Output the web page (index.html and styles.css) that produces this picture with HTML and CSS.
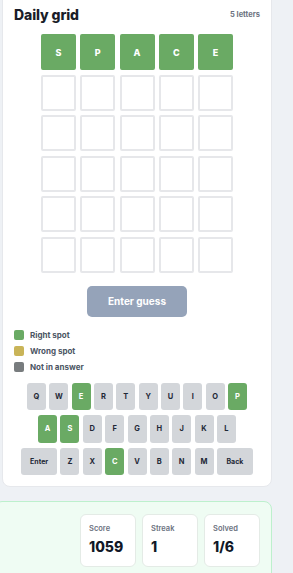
FILE: index.html
```html
<!DOCTYPE html>
<html lang="en">
<head>
<meta charset="UTF-8" />
<meta name="viewport" content="width=device-width, initial-scale=1.0" />
<title>Daily grid</title>
<link rel="stylesheet" href="styles.css">
</head>
<body>
<div class="page">

<!-- board -->
<section class="card board">
  <div class="board-head">
    <h2>Daily grid</h2>
    <span class="meta">5 letters</span>
  </div>

  <div class="grid">
    <div class="tile hit">S</div><div class="tile hit">P</div><div class="tile hit">A</div><div class="tile hit">C</div><div class="tile hit">E</div>
    <div class="tile"></div><div class="tile"></div><div class="tile"></div><div class="tile"></div><div class="tile"></div>
    <div class="tile"></div><div class="tile"></div><div class="tile"></div><div class="tile"></div><div class="tile"></div>
    <div class="tile"></div><div class="tile"></div><div class="tile"></div><div class="tile"></div><div class="tile"></div>
    <div class="tile"></div><div class="tile"></div><div class="tile"></div><div class="tile"></div><div class="tile"></div>
    <div class="tile"></div><div class="tile"></div><div class="tile"></div><div class="tile"></div><div class="tile"></div>
  </div>

  <button class="enter-btn" type="button">Enter guess</button>

  <ul class="legend">
    <li><span class="swatch right"></span>Right spot</li>
    <li><span class="swatch wrong"></span>Wrong spot</li>
    <li><span class="swatch none"></span>Not in answer</li>
  </ul>

  <div class="keyboard">
    <div class="kb-row">
      <span class="key">Q</span><span class="key">W</span><span class="key hit">E</span><span class="key">R</span><span class="key">T</span><span class="key">Y</span><span class="key">U</span><span class="key">I</span><span class="key">O</span><span class="key hit">P</span>
    </div>
    <div class="kb-row">
      <span class="key hit">A</span><span class="key hit">S</span><span class="key">D</span><span class="key">F</span><span class="key">G</span><span class="key">H</span><span class="key">J</span><span class="key">K</span><span class="key">L</span>
    </div>
    <div class="kb-row">
      <span class="key wide">Enter</span><span class="key">Z</span><span class="key">X</span><span class="key hit">C</span><span class="key">V</span><span class="key">B</span><span class="key">N</span><span class="key">M</span><span class="key wide">Back</span>
    </div>
  </div>
</section>

<!-- stats -->
<section class="card stats">
  <div class="stat">
    <div class="stat-label">Score</div>
    <div class="stat-value">1059</div>
  </div>
  <div class="stat">
    <div class="stat-label">Streak</div>
    <div class="stat-value">1</div>
  </div>
  <div class="stat">
    <div class="stat-label">Solved</div>
    <div class="stat-value">1/6</div>
  </div>
</section>

</div>
</body>
</html>
```

FILE: styles.css
```css
body {
    margin: 0;
    background-color: #eef1f5;
    font-family: Inter, "Noto Sans", "Liberation Sans", sans-serif;
    color: #111827;
    overflow: hidden;
}
.page {
    margin-top: -10px;
}
.card {
    border-radius: 8px;
    box-sizing: border-box;
}
.board {
    background-color: #ffffff;
    border: 1px solid #e6e8ec;
    margin: 0 21px 0 2px;
    padding: 14px 11px 11px;
}
.board-head {
    display: flex;
    justify-content: space-between;
    align-items: center;
    height: 18px;
}
.board-head h2 {
    margin: 0;
    font-size: 14px;
    font-weight: 800;
    color: #1a1d29;
    letter-spacing: -0.1px;
}
.meta {
    font-size: 7.5px;
    font-weight: 700;
    color: #6b7280;
}
.grid {
    display: grid;
    grid-template-columns: repeat(5, 35px);
    grid-auto-rows: 36px;
    column-gap: 4.3px;
    row-gap: 4.5px;
    justify-content: center;
    margin-top: 11px;
}
.tile {
    border: 2px solid #e6e7ea;
    border-radius: 2px;
    display: flex;
    justify-content: center;
    align-items: center;
    font-size: 9px;
    font-weight: 800;
    color: #fff;
}
.tile.hit {
    background-color: #6aaa64;
    border-color: #6aaa64;
}
.enter-btn {
    display: block;
    margin: 13px auto 0;
    width: 100px;
    height: 31px;
    border: none;
    border-radius: 5px;
    background-color: #95a3b9;
    color: #ffffff;
    font-family: inherit;
    font-size: 10px;
    font-weight: 700;
}
.legend {
    list-style: none;
    margin: 10px 0 0;
    padding: 0;
}
.legend li {
    display: flex;
    align-items: center;
    height: 16px;
    font-size: 8px;
    font-weight: 700;
    color: #4b5563;
}
.swatch {
    width: 10px;
    height: 10px;
    border-radius: 2px;
    margin-right: 6px;
}
.swatch.right { background-color: #6aaa64; }
.swatch.wrong { background-color: #c9b458; }
.swatch.none { background-color: #787c7e; }
.keyboard {
    margin-top: 8px;
    display: flex;
    flex-direction: column;
    gap: 5px;
}
.kb-row {
    display: flex;
    justify-content: center;
    gap: 3.35px;
}
.key {
    width: 19px;
    height: 27.5px;
    border-radius: 3px;
    background-color: #d3d6da;
    color: #1f2937;
    font-size: 7.5px;
    font-weight: 700;
    display: flex;
    justify-content: center;
    align-items: center;
}
.key.wide {
    width: 36px;
    font-size: 7px;
}
.key.hit {
    background-color: #6aaa64;
    color: #ffffff;
}
.stats {
    background-color: #effcf3;
    border: 1px solid #bdf0cd;
    margin: 14px 21px 0 -6px;
    padding: 12px 11px 14px;
    display: flex;
    justify-content: flex-end;
    gap: 6px;
}
.stat {
    width: 56px;
    height: 53px;
    box-sizing: border-box;
    background-color: #ffffff;
    border: 1px solid #e4ebe6;
    border-radius: 6px;
    padding: 9px 8px 0;
}
.stat-label {
    font-size: 7.5px;
    font-weight: 600;
    color: #6b7280;
}
.stat-value {
    margin-top: 5px;
    font-size: 14px;
    font-weight: 800;
    color: #111827;
}
```
